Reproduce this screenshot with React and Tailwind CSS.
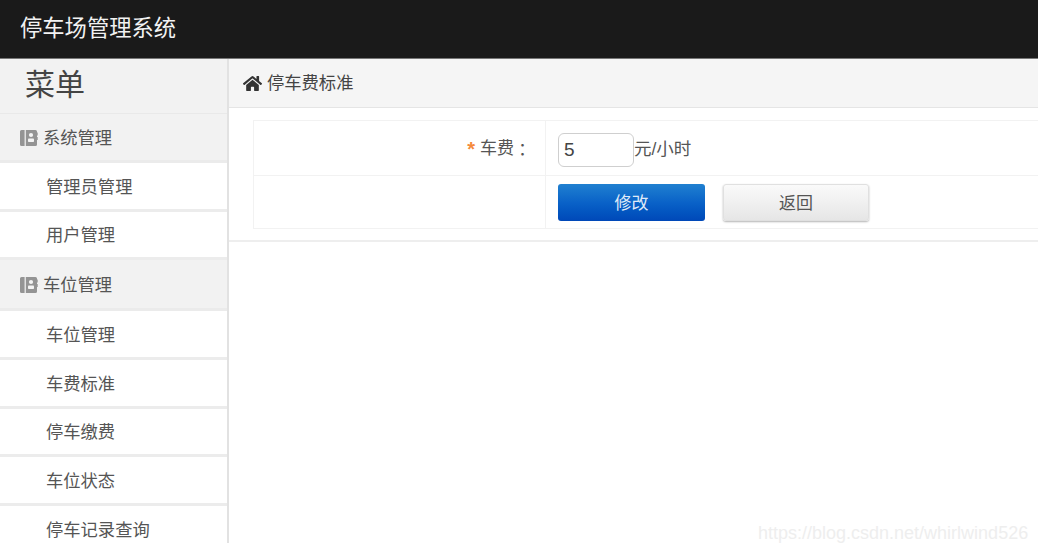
import { FaHome } from "react-icons/fa";

const BookIcon = () => (
  <svg width="18" height="16" viewBox="0 0 18 16" className="shrink-0">
    <path d="M1.5 0h14a1.5 1.5 0 0 1 1.5 1.5v13a1.5 1.5 0 0 1-1.5 1.5h-14A1.5 1.5 0 0 1 0 14.500v-13A1.5 1.500 0 0 1 1.500 0z" fill="#949494" />
    <rect x="4.500" y="0" width="1.500" height="16" fill="#e0e0e0" />
    <circle cx="11" cy="5" r="2.100" fill="#f4f4f4" />
    <rect x="8" y="8.500" width="6" height="3.500" rx="0.800" fill="#f4f4f4" />
    <rect x="17" y="2.500" width="1" height="3" fill="#b0b0b0" />
    <rect x="17" y="7" width="1" height="3" fill="#b0b0b0" />
  </svg>
);

const Section = ({ title, className }) => (
  <div className={`flex items-center gap-[5px] pl-[20px] pt-[1px] bg-[#f2f2f2] border-b-[3px] border-[#ebebeb] text-[#555] text-[17.300px] ${className}`}>
    <BookIcon />
    <span className="pt-[2px]">{title}</span>
  </div>
);

const Item = ({ title, className }) => (
  <div className={`flex items-center pl-[46px] pt-[3px] bg-white border-b-[3px] border-[#ececec] text-[#555] text-[17.300px] ${className}`}>
    {title}
  </div>
);

export default function App() {
  return (
    <div className="w-[1044px] h-[543px] overflow-hidden bg-white relative font-['Liberation_Sans','Noto_Sans_CJK_SC',sans-serif]">
      <div className="w-[1038px] h-full flex flex-col">
        <header className="h-[59px] shrink-0 bg-[#1a1a1a] border-b border-[#777] flex items-center pl-[20px] text-[22.300px] text-[#f2f2f2]">
          停车场管理系统
        </header>

        <div className="flex flex-1 min-h-0">
          <aside className="w-[229px] shrink-0 border-r-2 border-[#e2e2e2] flex flex-col overflow-hidden">
            <div className="h-[55px] shrink-0 bg-[#f2f2f2] border-b border-[#e9e9e9] pl-[25px] pb-[4px] flex items-center text-[30px] text-[#444]">
              菜单
            </div>
            <Section title="系统管理" className="h-[49px] shrink-0" />
            <Item title="管理员管理" className="h-[49px] shrink-0" />
            <Item title="用户管理" className="h-[48px] shrink-0" />
            <Section title="车位管理" className="h-[51px] shrink-0" />
            <Item title="车位管理" className="h-[49px] shrink-0" />
            <Item title="车费标准" className="h-[49px] shrink-0" />
            <Item title="停车缴费" className="h-[48px] shrink-0" />
            <Item title="车位状态" className="h-[49px] shrink-0" />
            <Item title="停车记录查询" className="h-[49px] shrink-0" />
          </aside>

          <main className="flex-1 min-w-0">
            <div className="h-[49px] bg-[#f5f5f5] border-b border-[#e5e5e5] flex items-center pl-[14px] gap-[5px] text-[17.300px] text-[#444]">
              <FaHome className="text-[19px] text-[#333]" />
              <span className="pt-[1px]">停车费标准</span>
            </div>

            <div className="pl-[24px] pt-[12px] border-b-2 border-[#eeeeee] h-[134px]">
              <div className="border-t border-l border-b border-[#f2f2f2] h-[109px] flex flex-col">
                <div className="h-[55px] flex border-b border-[#f2f2f2]">
                  <div className="w-[292px] shrink-0 border-r border-[#f2f2f2] flex items-center justify-end pr-[14px] pt-[1px] text-[17px] text-[#555]">
                    <span className="text-[#f58a3c] mr-[5px] text-[20px] font-bold">*</span>
                    <span>车费</span>
                    <span className="font-['Noto_Sans_CJK_TC',sans-serif]">：</span>
                  </div>
                  <div className="flex items-center pl-[12px] pt-[4px]">
                    <div className="w-[76px] h-[34px] border border-[#cfcfcf] rounded-[6px] bg-white flex items-center pl-[5px] pt-[1px] text-[19px] text-[#444]">
                      5
                    </div>
                    <span className="text-[17.500px] text-[#555] pb-[2px]">元/小时</span>
                  </div>
                </div>
                <div className="flex-1 flex">
                  <div className="w-[292px] shrink-0 border-r border-[#f2f2f2]" />
                  <div className="flex gap-[18px] pl-[12px] pt-[8px]">
                    <button className="w-[147px] h-[37px] pt-[2px] rounded-[3px] bg-gradient-to-b from-[#2080d0] via-[#0a62c8] to-[#0048b8] text-[#dfeaf8] text-[17px]">
                      修改
                    </button>
                    <button className="w-[146px] h-[37px] pt-[2px] rounded-[3px] bg-gradient-to-b from-[#fafafa] to-[#e6e6e6] border border-[#e0e0e0] shadow-[0_1px_2px_rgba(0,0,0,0.3)] text-[#555] text-[17px]">
                      返回
                    </button>
                  </div>
                </div>
              </div>
            </div>
          </main>
        </div>
      </div>

      <div className="absolute left-[758px] top-[522px] text-[18px] leading-[22px] text-[#eeeeee] whitespace-nowrap">
        https://blog.csdn.net/whirlwind526
      </div>
    </div>
  );
}
